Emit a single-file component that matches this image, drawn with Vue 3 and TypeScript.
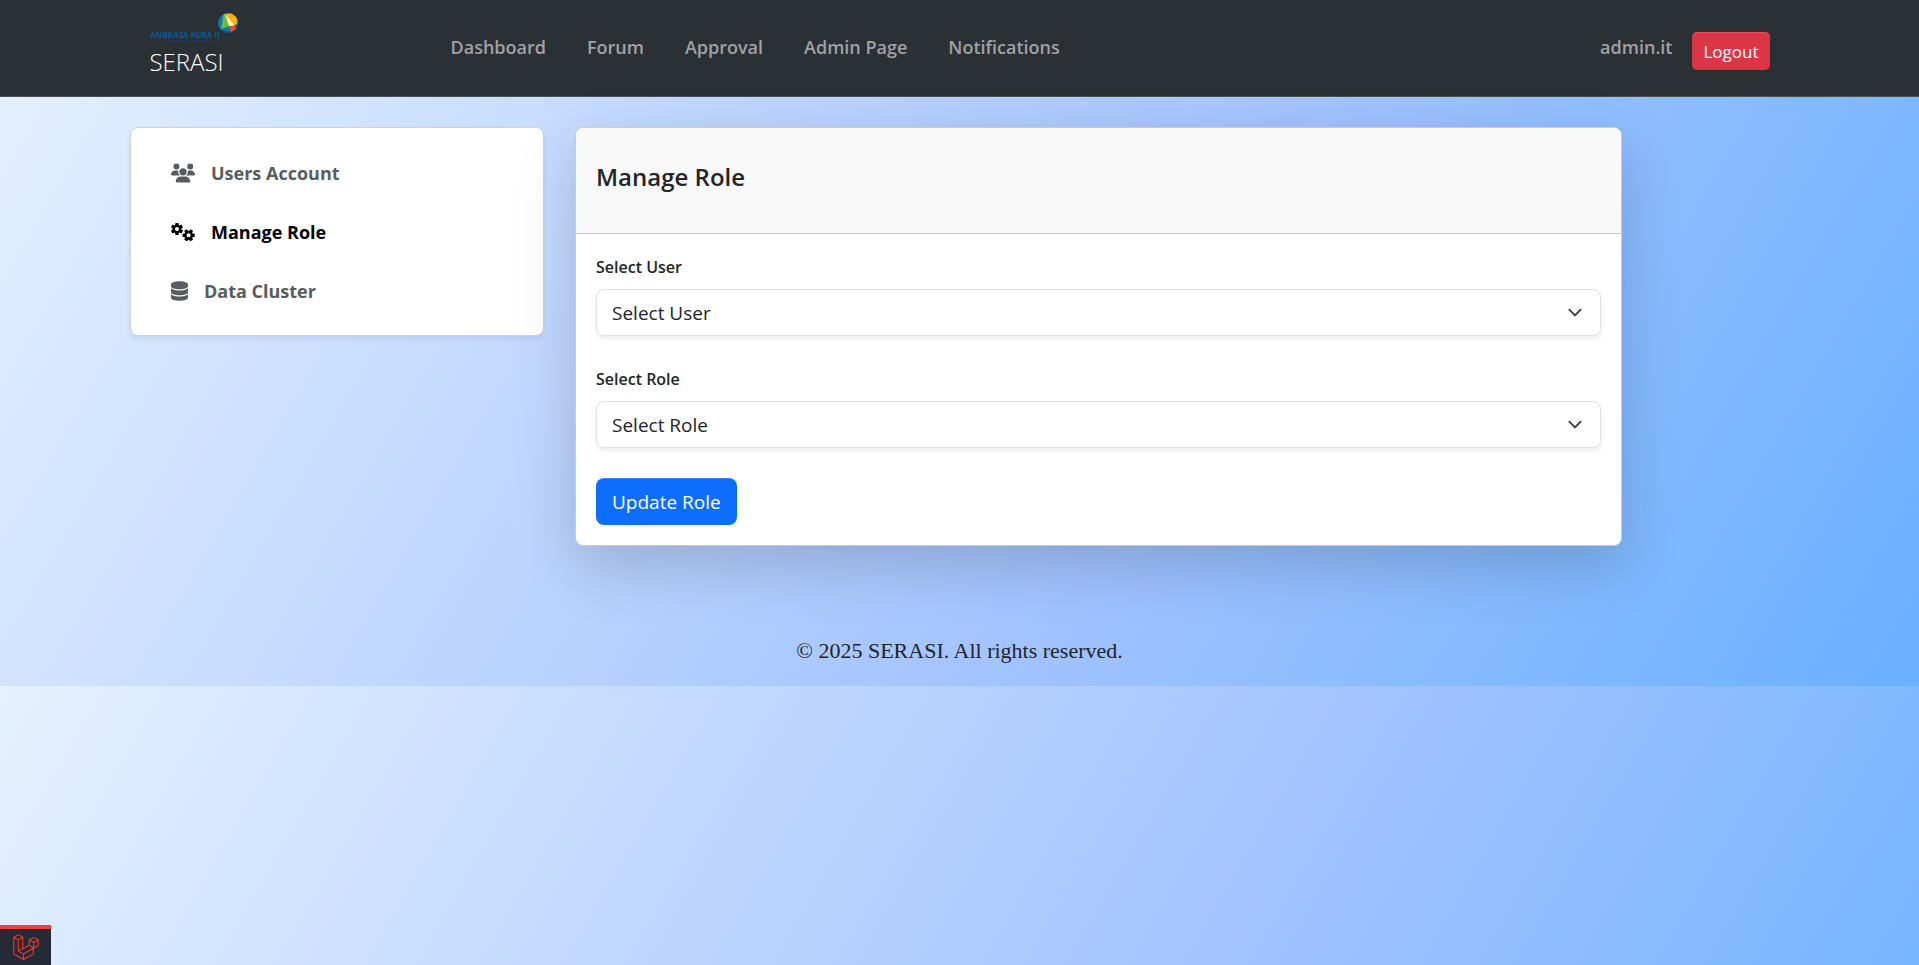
<script setup lang="ts">
import { ref } from 'vue'

interface NavLink {
  label: string
  href: string
}

interface SideItem {
  label: string
  href: string
  active: boolean
  width: number
  viewBox: string
  path: string
}

interface Field {
  id: string
  label: string
}

function gear(cx: number, cy: number, start: number): string {
  const points: string[] = []
  const at = (radius: number, degrees: number): string => {
    const a = (degrees * Math.PI) / 180
    return `${(cx + radius * Math.cos(a)).toFixed(1)} ${(cy + radius * Math.sin(a)).toFixed(1)}`
  }
  for (let i = 0; i < 6; i++) {
    const mid = start + i * 60
    points.push(at(116, mid - 26), at(168, mid - 14), at(168, mid + 14), at(116, mid + 26))
  }
  const hole = `M${cx - 54} ${cy}a54 54 0 1 0 108 0a54 54 0 1 0 -108 0z`
  return `M${points.join('L')}z${hole}`
}

const navLinks: NavLink[] = [
  { label: 'Dashboard', href: '#dashboard' },
  { label: 'Forum', href: '#forum' },
  { label: 'Approval', href: '#approval' },
  { label: 'Admin Page', href: '#admin' },
  { label: 'Notifications', href: '#notifications' },
]

const sideItems: SideItem[] = [
  {
    label: 'Users Account',
    href: '#users',
    active: false,
    width: 24,
    viewBox: '0 0 640 512',
    path: 'M144 0a80 80 0 1 1 0 160A80 80 0 1 1 144 0zM512 0a80 80 0 1 1 0 160A80 80 0 1 1 512 0zM0 298.7C0 239.8 47.8 192 106.7 192h42.7c15.9 0 31 3.5 44.6 9.7c-1.3 7.2-1.9 14.7-1.9 22.3c0 38.2 16.8 72.5 43.3 96H21.3C9.6 320 0 310.4 0 298.7zM405.3 320c26.6-23.5 43.3-57.8 43.3-96c0-7.6-.7-15-1.9-22.3c13.6-6.3 28.7-9.7 44.6-9.7h42.7C592.2 192 640 239.8 640 298.7c0 11.8-9.6 21.3-21.3 21.3H405.3zM224 224a96 96 0 1 1 192 0 96 96 0 1 1 -192 0zM128 485.3C128 411.7 187.7 352 261.3 352H378.7C452.3 352 512 411.7 512 485.3c0 14.7-11.9 26.7-26.7 26.7H154.7c-14.7 0-26.7-11.9-26.7-26.7z',
  },
  {
    label: 'Manage Role',
    href: '#roles',
    active: true,
    width: 24,
    viewBox: '0 0 640 512',
    path: gear(160, 176, 30) + gear(470, 344, 0),
  },
  {
    label: 'Data Cluster',
    href: '#clusters',
    active: false,
    width: 17,
    viewBox: '0 0 448 512',
    path: 'M448 80v48c0 44.2-100.3 80-224 80S0 172.2 0 128V80C0 35.8 100.3 0 224 0S448 35.8 448 80zM393.2 214.7c20.8-7.4 39.9-16.9 54.8-28.6V288c0 44.2-100.3 80-224 80S0 332.2 0 288V186.1c14.9 11.8 34 21.2 54.8 28.6C99.7 230.7 159.5 240 224 240s124.3-9.3 169.2-25.3zM0 346.1c14.9 11.8 34 21.2 54.8 28.6C99.7 390.7 159.5 400 224 400s124.3-9.3 169.2-25.3c20.8-7.4 39.9-16.9 54.8-28.6V432c0 44.2-100.3 80-224 80S0 476.2 0 432V346.1z',
  },
]

const fields: Field[] = [
  { id: 'user', label: 'Select User' },
  { id: 'role', label: 'Select Role' },
]

const selected = ref<Record<string, string>>({ user: '', role: '' })
</script>

<template>
  <div class="page">
    <header class="navbar">
      <div class="navbar-inner">
        <a class="brand" href="#home">
          <svg class="brand-logo" width="90" height="32" viewBox="0 0 90 32" role="img" aria-label="Angkasa Pura II">
            <defs>
              <clipPath id="ball"><circle cx="78" cy="11" r="10" /></clipPath>
            </defs>
            <g clip-path="url(#ball)">
              <rect x="68" y="1" width="20" height="20" fill="#0b78b0" />
              <path d="M70 17L80 20L88 11L88 22L70 22z" fill="#07568f" />
              <path d="M74 0L71 17L80 14z" fill="#6dbb45" />
              <path d="M75 2L82 1L88 6L87 12L83 14z" fill="#fbb314" />
              <path d="M75 2L85 14L79 14z" fill="#fff3a6" />
              <path d="M79 15L85 13L86 17L81 20z" fill="#ee4b2b" />
            </g>
            <text x="0" y="26" class="logo-name">ANGKASA PURA II</text>
            <text x="16" y="31" class="logo-tagline">INDONESIA'S AIRPORT COMPANY</text>
          </svg>
          <span class="brand-name">SERASI</span>
        </a>
        <nav class="links" aria-label="Main">
          <a v-for="link in navLinks" :key="link.label" class="nav-link" :href="link.href">{{ link.label }}</a>
        </nav>
        <div class="account">
          <a class="nav-link" href="#profile">admin.it</a>
          <button class="logout" type="button">Logout</button>
        </div>
      </div>
    </header>

    <main class="content">
      <nav class="sidebar" aria-label="Administration">
        <a
          v-for="item in sideItems"
          :key="item.label"
          class="side-link"
          :class="{ active: item.active }"
          :href="item.href"
        >
          <svg :width="item.width" height="20" :viewBox="item.viewBox" aria-hidden="true">
            <path :d="item.path" fill="currentColor" fill-rule="evenodd" />
          </svg>
          <span>{{ item.label }}</span>
        </a>
      </nav>

      <section class="card">
        <div class="card-header">
          <h1 class="card-title">Manage Role</h1>
        </div>
        <form class="card-body" @submit.prevent>
          <div v-for="field in fields" :key="field.id" class="field">
            <label class="label" :for="field.id">{{ field.label }}</label>
            <select :id="field.id" v-model="selected[field.id]" class="select">
              <option value="">{{ field.label }}</option>
            </select>
          </div>
          <button class="submit" type="submit">Update Role</button>
        </form>
      </section>
    </main>

    <footer class="footer">© 2025 SERASI. All rights reserved.</footer>

    <button class="debugbar" type="button" aria-label="Open debug bar">
      <svg width="26" height="26" viewBox="0 0 24 24" fill="none" stroke="#f0352b" stroke-width="1" stroke-linejoin="round" aria-hidden="true">
        <path d="M.7 3L4.9.6L9 3L4.9 5.4zM.7 3V18.4L9.7 23.6L18.8 18.4V13M4.9 5.4V15.8L9.7 18.4L18.8 13.2M9 3V13.2L4.9 15.8M9.7 18.4V23.6" />
        <path d="M15 5.5L19.1 3.1L23.3 5.5L19.1 7.9zM15 5.5V10.4L19.1 12.9L23.3 10.4V5.5M19.1 7.9V12.9M15 10.4L9 13.6" />
      </svg>
    </button>
  </div>
</template>

<style>
body {
  background: linear-gradient(120deg, #e5f1ff 0%, #a6c5ff 57%, #69b0ff 100%);
}
</style>

<style scoped>
.page {
  color: #212529;
  font-family: "Open Sans", "Noto Sans", sans-serif;
  font-size: 19px;
  line-height: 30px;
}

.navbar {
  background: #2b3035;
  border-bottom: 1px solid #495057;
}

.navbar-inner {
  display: flex;
  align-items: center;
  box-sizing: border-box;
  max-width: 1650px;
  height: 96px;
  margin: 0 auto;
  padding: 0 15px 2px;
}

.brand {
  display: flex;
  flex-direction: column;
  width: 301px;
  flex-shrink: 0;
  padding-bottom: 3px;
  color: #fff;
  text-decoration: none;
}

.brand-logo {
  display: block;
}

.brand-name {
  font-size: 24px;
  font-weight: 300;
  line-height: 36px;
}

.logo-name {
  fill: #0b5a96;
  font-size: 8px;
  font-weight: 700;
}

.logo-tagline {
  fill: #0b4b7a;
  font-size: 3px;
}

.links {
  display: flex;
  flex: 1;
  gap: 41px;
}

.nav-link {
  color: #a0a2a4;
  font-size: 18px;
  font-weight: 600;
  text-decoration: none;
  white-space: nowrap;
}

.account {
  display: flex;
  align-items: center;
  gap: 20px;
}

.logout {
  height: 38px;
  margin-top: 8px;
  padding: 0 11px;
  border: 0;
  border-radius: 5px;
  background: #dc3545;
  box-shadow: inset 0 1px 0 rgba(255, 255, 255, 0.15);
  color: #fff;
  font-family: inherit;
  font-size: 17px;
}

.content {
  display: grid;
  grid-template-columns: minmax(0, 414px) minmax(0, 1047px);
  align-items: start;
  gap: 31px;
  max-width: 1659px;
  margin: 30px auto 0;
}

.sidebar {
  padding: 15px 40px;
  border: 1px solid #d0d2d6;
  border-radius: 8px;
  background: #fff;
  box-shadow: 0 3px 5px rgba(0, 0, 0, 0.075);
}

.side-link {
  display: flex;
  align-items: center;
  gap: 16px;
  height: 59px;
  color: #585c60;
  font-size: 18px;
  font-weight: 700;
  text-decoration: none;
}

.side-link.active {
  color: #000;
}

.card {
  border: 1px solid #c8cbd0;
  border-radius: 8px;
  background: #fff;
  box-shadow: 0 20px 60px rgba(0, 0, 0, 0.175);
}

.card-header {
  padding: 34px 20px 41px;
  border-bottom: 1px solid #c9c9c9;
  border-radius: 7px 7px 0 0;
  background: #f8f8f8;
}

.card-title {
  margin: 0;
  font-size: 24px;
  font-weight: 600;
  line-height: 30px;
}

.card-body {
  padding: 20px;
}

.field {
  display: flex;
  flex-direction: column;
  gap: 8px;
  margin-bottom: 30px;
}

.label {
  font-size: 16px;
  font-weight: 600;
  line-height: 27px;
}

.select {
  box-sizing: border-box;
  width: 100%;
  height: 47px;
  padding: 0 45px 0 15px;
  appearance: none;
  border: 1px solid #dee2e6;
  border-radius: 8px;
  background: #fff
    url("data:image/svg+xml,%3Csvg xmlns='http://www.w3.org/2000/svg' viewBox='0 0 16 16'%3E%3Cpath fill='none' stroke='%23343a40' stroke-linecap='round' stroke-linejoin='round' stroke-width='2' d='m2 5 6 6 6-6'/%3E%3C/svg%3E")
    no-repeat right 15px center / 20px 15px;
  box-shadow: 0 3px 5px rgba(0, 0, 0, 0.075);
  color: #212529;
  font-family: inherit;
  font-size: 19px;
}

.submit {
  display: block;
  height: 47px;
  padding: 0 16px;
  border: 0;
  border-radius: 8px;
  background: #0d6efd;
  box-shadow: inset 0 1px 0 rgba(255, 255, 255, 0.15);
  color: #fff;
  font-family: inherit;
  font-size: 19px;
}

.footer {
  padding: 90px 20px 20px;
  font-family: Georgia, "Liberation Serif", serif;
  font-size: 22px;
  text-align: center;
}

.debugbar {
  position: fixed;
  bottom: 0;
  left: 0;
  display: flex;
  align-items: center;
  justify-content: center;
  width: 51px;
  height: 40px;
  padding: 0;
  border: 0;
  border-top: 4px solid #ef4433;
  background: #252a37;
}
</style>
